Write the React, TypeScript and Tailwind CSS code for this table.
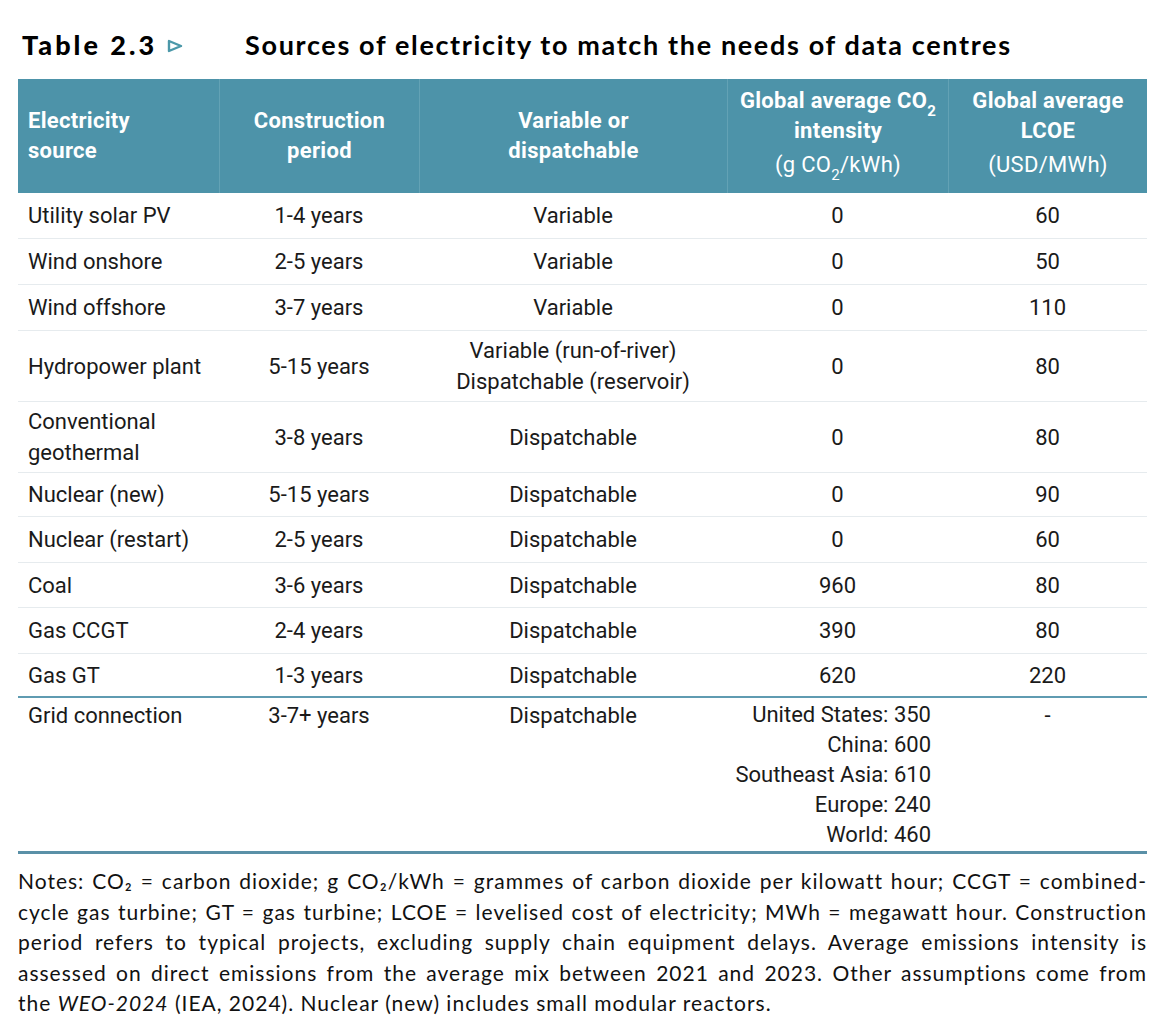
import React from 'react'

type Row = {
  source: React.ReactNode
  period: string
  kind: React.ReactNode
  co2: string
  lcoe: string
  h: string
}

const GRID = 'grid grid-cols-[201px_200px_308px_221px_199px]'

const rows: Row[] = [
  { source: 'Utility solar PV', period: '1-4 years', kind: 'Variable', co2: '0', lcoe: '60', h: 'h-[46px]' },
  { source: 'Wind onshore', period: '2-5 years', kind: 'Variable', co2: '0', lcoe: '50', h: 'h-[46px]' },
  { source: 'Wind offshore', period: '3-7 years', kind: 'Variable', co2: '0', lcoe: '110', h: 'h-[46px]' },
  {
    source: 'Hydropower plant',
    period: '5-15 years',
    kind: (
      <>
        Variable (run-of-river)
        <br />
        Dispatchable (reservoir)
      </>
    ),
    co2: '0',
    lcoe: '80',
    h: 'h-[71px]',
  },
  {
    source: (
      <>
        Conventional
        <br />
        geothermal
      </>
    ),
    period: '3-8 years',
    kind: 'Dispatchable',
    co2: '0',
    lcoe: '80',
    h: 'h-[71px]',
  },
  { source: 'Nuclear (new)', period: '5-15 years', kind: 'Dispatchable', co2: '0', lcoe: '90', h: 'h-[44px]' },
  { source: 'Nuclear (restart)', period: '2-5 years', kind: 'Dispatchable', co2: '0', lcoe: '60', h: 'h-[46px]' },
  { source: 'Coal', period: '3-6 years', kind: 'Dispatchable', co2: '960', lcoe: '80', h: 'h-[45px]' },
  { source: 'Gas CCGT', period: '2-4 years', kind: 'Dispatchable', co2: '390', lcoe: '80', h: 'h-[46px]' },
  { source: 'Gas GT', period: '1-3 years', kind: 'Dispatchable', co2: '620', lcoe: '220', h: 'h-[44px]' },
]

const gridRegions = ['United States: 350', 'China: 600', 'Southeast Asia: 610', 'Europe: 240', 'World: 460']

const noteLines: React.ReactNode[] = [
  'Notes: CO₂ = carbon dioxide; g CO₂/kWh = grammes of carbon dioxide per kilowatt hour; CCGT = combined-',
  'cycle gas turbine; GT = gas turbine; LCOE = levelised cost of electricity; MWh = megawatt hour. Construction',
  'period refers to typical projects, excluding supply chain equipment delays. Average emissions intensity is',
  'assessed on direct emissions from the average mix between 2021 and 2023. Other assumptions come from',
  <>
    the <i>WEO-2024</i> (IEA, 2024). Nuclear (new) includes small modular reactors.
  </>,
]

export default function App() {
  return (
    <div className="w-[1169px] h-[1026px] bg-white text-[#1a1a1a] font-['Roboto',sans-serif] pl-[18px] pt-[26px]">
      {/* Title */}
      <div className="flex items-center h-[38px] font-['Lato',sans-serif] text-[27px] text-black">
        <span className="pl-[4px] font-black tracking-[3px]">Table 2.3</span>
        <svg className="ml-[10px] mt-[2px]" width="16" height="14" viewBox="0 0 16 14">
          <path d="M2 2 L14 7 L2 12 Z" fill="none" stroke="#4b98a9" strokeWidth="2.4" strokeLinejoin="round" />
        </svg>
        <span className="ml-[62px] font-bold tracking-[1.65px]">Sources of electricity to match the needs of data centres</span>
      </div>

      <div className="w-[1129px] mt-[15px]">
        {/* Header */}
        <div className={`${GRID} h-[114px] bg-[#4d93a9] text-white text-[22px] font-bold leading-[30px] tracking-[0.3px]`}>
          <div className="flex items-center pl-[10px]">
            <div>
              Electricity
              <br />
              source
            </div>
          </div>
          <div className="flex items-center justify-center text-center border-l border-[#63a2b5]">
            <div>
              Construction
              <br />
              period
            </div>
          </div>
          <div className="flex items-center justify-center text-center border-l border-[#63a2b5]">
            <div>
              Variable or
              <br />
              dispatchable
            </div>
          </div>
          <div className="flex items-center justify-center text-center border-l border-[#63a2b5]">
            <div className="mt-[-2px]">
              Global average CO<sub className="text-[15px] align-[-4px]">2</sub>
              <br />
              intensity
              <br />
              <span className="font-normal leading-[38px]">
                (g CO<sub className="text-[15px] align-[-4px]">2</sub>/kWh)
              </span>
            </div>
          </div>
          <div className="flex items-center justify-center text-center border-l border-[#63a2b5]">
            <div className="mt-[-2px]">
              Global average
              <br />
              LCOE
              <br />
              <span className="font-normal leading-[38px]">(USD/MWh)</span>
            </div>
          </div>
        </div>

        {/* Body rows */}
        <div className="text-[22px] leading-[31px]">
          {rows.map((r, i) => (
            <div
              key={i}
              className={`${GRID} ${r.h} items-center ${i < rows.length - 1 ? 'border-b border-[#e6ebee]' : 'border-b-2 border-[#5f9bb1]'}`}
            >
              <div className="pl-[10px] whitespace-nowrap">{r.source}</div>
              <div className="text-center">{r.period}</div>
              <div className="text-center">{r.kind}</div>
              <div className="text-center">{r.co2}</div>
              <div className="text-center">{r.lcoe}</div>
            </div>
          ))}

          {/* Grid connection */}
          <div className={`${GRID} h-[156px] border-b-[3px] border-[#5a90a7] pt-[2px]`}>
            <div className="pl-[10px]">Grid connection</div>
            <div className="text-center">3-7+ years</div>
            <div className="text-center">Dispatchable</div>
            <div className="text-right pr-[17px] leading-[30px]">
              {gridRegions.map(g => (
                <div key={g}>{g}</div>
              ))}
            </div>
            <div className="text-center">-</div>
          </div>
        </div>

        {/* Notes */}
        <div className="mt-[12px] font-['Lato',sans-serif] text-[21px] leading-[30.5px] tracking-[1px] text-[#111]">
          {noteLines.map((l, i) => (
            <div
              key={i}
              className={i < noteLines.length - 1 ? 'text-justify [text-align-last:justify]' : ''}
            >
              {l}
            </div>
          ))}
        </div>
      </div>
    </div>
  )
}
